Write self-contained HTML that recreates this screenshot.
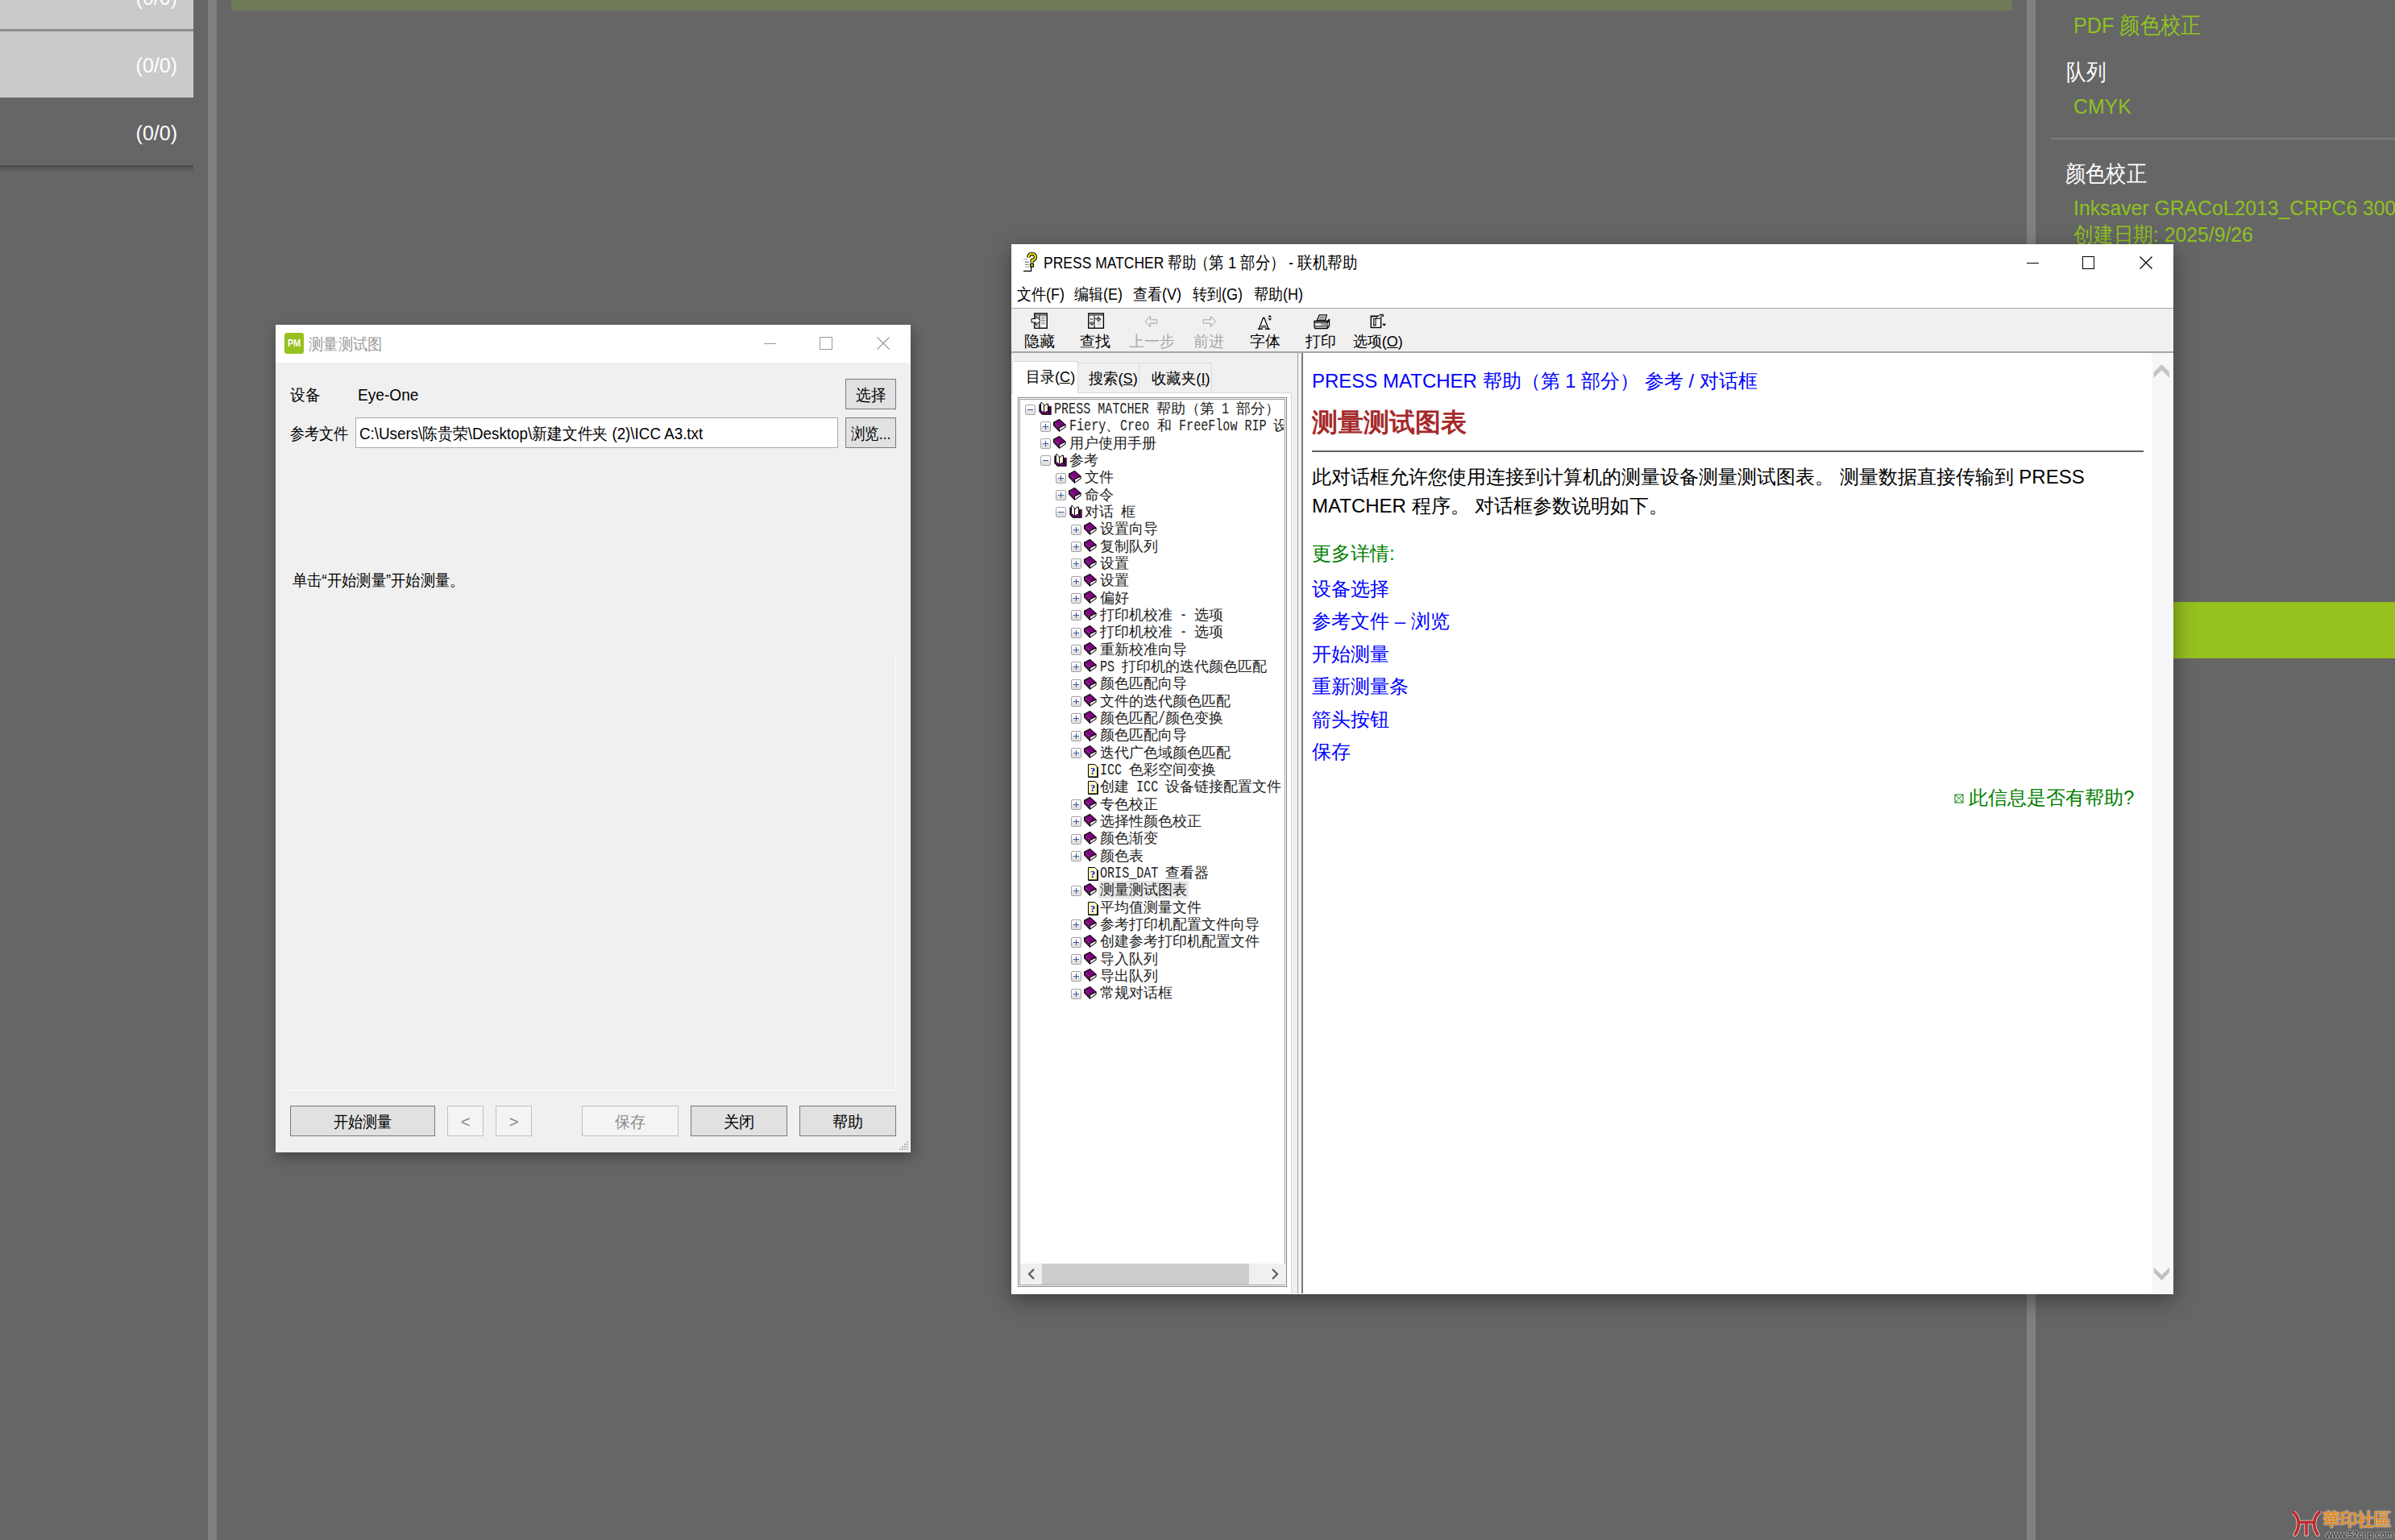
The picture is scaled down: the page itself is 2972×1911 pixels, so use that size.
<!DOCTYPE html>
<html><head><meta charset="utf-8">
<style>
*{margin:0;padding:0;box-sizing:border-box}
html,body{width:2972px;height:1911px;overflow:hidden}
body{background:#666666;position:relative;font-family:"Liberation Sans",sans-serif;color:#000}
.a{position:absolute}
.nw{white-space:nowrap}
.sx{transform-origin:0 50%}
.exp{width:13px;height:13px;border:1px solid #a3a3a3;border-radius:2px;background:linear-gradient(#fff 50%,#e2e2e2 50%)}
.tr{font-size:18px;line-height:22px;color:#222}
.lmo{display:inline-block;overflow:visible;white-space:nowrap}
.lm{display:inline-block;font-family:"Liberation Mono",monospace;font-size:19.5px;transform:scaleX(0.7735);transform-origin:0 0}
.btn{background:#e1e1e1;border:1px solid #7a7a7a;font-size:20px;line-height:35px;text-align:center}
.btnd{background:#f4f4f4;border:1px solid #bcc1c5;font-size:20px;line-height:35px;text-align:center;color:#8a8a8a}
</style></head><body>
<div class="a" style="left:0;top:0;width:240px;height:36px;background:#cacaca"></div>
<div class="a" style="left:0;top:36px;width:240px;height:3px;background:#8e8e8e"></div>
<div class="a" style="left:0;top:39px;width:240px;height:82px;background:#cacaca"></div>
<div class="a" style="left:0;top:205px;width:240px;height:2px;background:#4d4d4d"></div>
<div class="a" style="left:0;top:207px;width:240px;height:7px;background:linear-gradient(#545454,#666)"></div>
<div class="a nw" style="right:2752px;top:-18px;font-size:25px;line-height:30px;color:#fff">(0/0)</div>
<div class="a nw" style="right:2752px;top:66px;font-size:25px;line-height:30px;color:#fff">(0/0)</div>
<div class="a nw" style="right:2752px;top:150px;font-size:25px;line-height:30px;color:#fff">(0/0)</div>
<div class="a" style="left:258px;top:0;width:11px;height:1911px;background:#808080"></div>
<div class="a" style="left:287px;top:0;width:2210px;height:13px;background:#6e7a58"></div>
<div class="a" style="left:2515px;top:0;width:11px;height:1911px;background:#808080"></div>
<div class="a nw" style="left:2573px;top:15px;font-size:28px;line-height:34px;color:#8dc21f;transform:scaleX(0.9);transform-origin:0 50%">PDF 颜色校正</div>
<div class="a nw" style="left:2564px;top:73px;font-size:28px;line-height:34px;color:#fff;transform:scaleX(0.88);transform-origin:0 50%">队列</div>
<div class="a nw" style="left:2573px;top:115px;font-size:26px;line-height:34px;color:#8dc21f;transform:scaleX(0.955);transform-origin:0 50%">CMYK</div>
<div class="a" style="left:2544px;top:171px;width:428px;height:2px;background:#7c7c7c"></div>
<div class="a nw" style="left:2563px;top:199px;font-size:28px;line-height:34px;color:#fff;transform:scaleX(0.9);transform-origin:0 50%">颜色校正</div>
<div class="a nw" style="left:2573px;top:241px;font-size:26px;line-height:34px;color:#8dc21f;transform:scaleX(0.952);transform-origin:0 50%">Inksaver GRACoL2013_CRPC6 300</div>
<div class="a nw" style="left:2573px;top:274px;font-size:26px;line-height:34px;color:#8dc21f;transform:scaleX(0.952);transform-origin:0 50%">创建日期: 2025/9/26</div>
<div class="a" style="left:2697px;top:747px;width:275px;height:70px;background:#96c11f"></div>
<svg class="a" style="left:2844px;top:1875px" width="38" height="34" viewBox="0 0 38 34"><g fill="none" stroke="#d8d8d8" stroke-width="5.2" stroke-linecap="round"><path d="M1.5 1.5C9 7 11 19 4 29"/><path d="M34.5 1.5C27 7 25 19 32 29"/><path d="M9 14H27"/><path d="M18 14V29"/></g><g fill="none" stroke="#bf2a2a" stroke-width="3.6" stroke-linecap="round"><path d="M1.5 1.5C9 7 11 19 4 29"/><path d="M34.5 1.5C27 7 25 19 32 29"/><path d="M9 14H27"/><path d="M18 14V29"/></g></svg>
<div class="a nw" style="left:2883px;top:1872px;font-size:22px;line-height:28px;color:#e08a22;font-weight:bold;letter-spacing:0px;transform:scaleX(0.95);transform-origin:0 50%;text-shadow:0 0 2px #dde3ea,0 0 1px #dde3ea">華印社區</div>
<div class="a nw" style="left:2886px;top:1898px;font-size:11px;line-height:12px;color:#333;font-weight:bold;transform:scaleX(0.98);transform-origin:0 50%;text-shadow:0 0 2px #eee,0 0 1px #eee">www.52cnp.com</div>
<div class="a" style="left:342px;top:403px;width:788px;height:1027px;background:#f0f0f0;box-shadow:2px 6px 16px rgba(0,0,0,0.32)"><div class="a" style="left:0;top:0;width:788px;height:47px;background:#fff"></div><div class="a" style="left:11px;top:10px;width:24px;height:26px;background:#97c020;border-radius:3px;color:#fff;font-weight:bold;font-size:13px;line-height:25px;text-align:center"><div style="transform:scaleX(0.85)">PM</div></div><div class="a nw" style="left:41px;top:11px;font-size:20px;line-height:26px;color:#9a9a9a;transform:scaleX(0.914);transform-origin:0 50%">测量测试图</div><div class="a" style="left:606px;top:23px;width:15px;height:1px;background:#999"></div><div class="a" style="left:675px;top:15px;width:16px;height:16px;border:1px solid #999"></div><svg class="a" style="left:746px;top:15px" width="16" height="16" viewBox="0 0 16 16"><path d="M0.5 0.5L15.5 15.5M15.5 0.5L0.5 15.5" stroke="#999" stroke-width="1.1"/></svg><div class="a nw" style="left:18px;top:74px;font-size:20px;line-height:26px;color:#000;transform:scaleX(0.93);transform-origin:0 50%">设备</div><div class="a nw" style="left:102px;top:74px;font-size:20px;line-height:26px;color:#000;transform:scaleX(0.955);transform-origin:0 50%">Eye-One</div><div class="a btn" style="left:707px;top:67px;width:63px;height:38px"><div style="transform:scaleX(0.93);margin-top:2px">选择</div></div><div class="a nw" style="left:18px;top:122px;font-size:20px;line-height:26px;color:#000;transform:scaleX(0.906);transform-origin:0 50%">参考文件</div><div class="a" style="left:99px;top:115px;width:599px;height:38px;background:#fff;border:1px solid #a9abad"></div><div class="a nw" style="left:104px;top:122px;font-size:20px;line-height:26px;color:#000;transform:scaleX(0.94);transform-origin:0 50%">C:\Users\陈贵荣\Desktop\新建文件夹 (2)\ICC A3.txt</div><div class="a btn" style="left:707px;top:115px;width:63px;height:38px"><div style="transform:scaleX(0.88);margin-top:2px">浏览...</div></div><div class="a nw" style="left:21px;top:304px;font-size:20px;line-height:26px;color:#000;transform:scaleX(0.915);transform-origin:0 50%">单击“开始测量”开始测量。</div><div class="a" style="left:18px;top:949px;width:752px;height:1px;background:#fff"></div><div class="a" style="left:769px;top:405px;width:1px;height:545px;background:#fafafa"></div><div class="a btn" style="left:18px;top:969px;width:180px;height:38px"><div style="transform:scaleX(0.907);margin-top:2px">开始测量</div></div><div class="a btnd" style="left:213px;top:969px;width:45px;height:38px"><div style="transform:scaleX(1);margin-top:2px">&lt;</div></div><div class="a btnd" style="left:273px;top:969px;width:45px;height:38px"><div style="transform:scaleX(1);margin-top:2px">&gt;</div></div><div class="a btnd" style="left:380px;top:969px;width:120px;height:38px"><div style="transform:scaleX(0.95);margin-top:2px">保存</div></div><div class="a btn" style="left:515px;top:969px;width:120px;height:38px"><div style="transform:scaleX(0.97);margin-top:2px">关闭</div></div><div class="a btn" style="left:650px;top:969px;width:120px;height:38px"><div style="transform:scaleX(0.95);margin-top:2px">帮助</div></div><svg class="a" style="left:774px;top:1012px" width="12" height="12" viewBox="0 0 12 12" fill="#b8b8b8"><rect x="9" y="1" width="2" height="2"/><rect x="6" y="4" width="2" height="2"/><rect x="9" y="4" width="2" height="2"/><rect x="3" y="7" width="2" height="2"/><rect x="6" y="7" width="2" height="2"/><rect x="9" y="7" width="2" height="2"/><rect x="0" y="10" width="2" height="2"/><rect x="3" y="10" width="2" height="2"/><rect x="6" y="10" width="2" height="2"/><rect x="9" y="10" width="2" height="2"/></svg></div>
<div class="a" style="left:1255px;top:303px;width:1442px;height:1303px;background:#fff;box-shadow:0 8px 26px rgba(0,0,0,0.4);overflow:hidden"><svg class="a" style="left:14px;top:9px" width="20" height="27" viewBox="0 0 20 27"><path d="M1 9.6h5" stroke="#bbb" stroke-width="1.3"/><path d="M3 13.3h4.8M3 16.4h4.8" stroke="#888" stroke-width="1.4"/><path d="M3 19.2h5.5" stroke="#999" stroke-width="0.9"/><path d="M1 24.4h9.6V19" stroke="#000" stroke-width="1.2" fill="none"/><path d="M7.6 7.6V5.2L9.4 3.3h4.4l1.9 1.9v3.6l-1.9 2h-2.2v2.6" fill="none" stroke="#000" stroke-width="4.2" stroke-linejoin="round"/><path d="M7.6 7.6V5.2L9.4 3.3h4.4l1.9 1.9v3.6l-1.9 2h-2.2v2.6" fill="none" stroke="#ffee00" stroke-width="2"/><rect x="9.8" y="15.2" width="3.6" height="3.8" fill="#ffee00" stroke="#000" stroke-width="1.3"/></svg><div class="a nw" style="left:40.3px;top:10px;font-size:21px;line-height:26px;color:#000;transform:scaleX(0.833);transform-origin:0 50%">PRESS MATCHER 帮助</div><div class="a nw" style="left:227.4px;top:10px;font-size:21px;line-height:26px;color:#000;transform:scaleX(0.877);transform-origin:0 50%">（第 1 部分）</div><div class="a nw" style="left:344.4px;top:10px;font-size:21px;line-height:26px;color:#000;transform:scaleX(0.878);transform-origin:0 50%">- 联机帮助</div><div class="a" style="left:1260px;top:23px;width:15px;height:1.3px;background:#000"></div><div class="a" style="left:1329px;top:15px;width:15px;height:16px;border:1.3px solid #000"></div><svg class="a" style="left:1400px;top:15px" width="16" height="16" viewBox="0 0 16 16"><path d="M0.5 0.5L15.5 15.5M15.5 0.5L0.5 15.5" stroke="#000" stroke-width="1.3"/></svg><div class="a nw" style="left:7px;top:49px;font-size:20px;line-height:26px;color:#000;transform:scaleX(0.9);transform-origin:0 50%">文件(F)</div><div class="a nw" style="left:78px;top:49px;font-size:20px;line-height:26px;color:#000;transform:scaleX(0.9);transform-origin:0 50%">编辑(E)</div><div class="a nw" style="left:151px;top:49px;font-size:20px;line-height:26px;color:#000;transform:scaleX(0.9);transform-origin:0 50%">查看(V)</div><div class="a nw" style="left:225px;top:49px;font-size:20px;line-height:26px;color:#000;transform:scaleX(0.9);transform-origin:0 50%">转到(G)</div><div class="a nw" style="left:301px;top:49px;font-size:20px;line-height:26px;color:#000;transform:scaleX(0.9);transform-origin:0 50%">帮助(H)</div><div class="a" style="left:0;top:79px;width:1442px;height:1px;background:#a8a8a8"></div><div class="a" style="left:0;top:80px;width:1442px;height:54px;background:#f0f0f0"></div><svg class="a" style="left:24px;top:84px" width="22" height="22" viewBox="0 0 22 22"><rect x="4.7" y="2" width="15.5" height="18.2" fill="#fff" stroke="#000" stroke-width="1.4"/><rect x="4.7" y="2" width="15.5" height="2.6" fill="#333"/><path d="M5.5 3.3h14" stroke="#ddd" stroke-width="0.6"/><rect x="5.4" y="4.6" width="5" height="15" fill="#c8c8c8"/><path d="M10.9 4.5v15.5" stroke="#000" stroke-width="1.1"/><path d="M13 6.4h5.5M13 8.5h4.5M13 10.5h5.5M13 12.6h4.5M13 14.8h5.5" stroke="#777" stroke-width="0.9"/><path d="M1 8.6H6.4V5.3L12 10.8L6.4 16.3V13H1Z" fill="#fff" stroke="#000" stroke-width="1" stroke-linejoin="miter"/></svg><div class="a nw" style="left:-25px;top:108px;width:120px;text-align:center;font-size:19px;line-height:26px;color:#000">隐藏</div><svg class="a" style="left:93px;top:84px" width="24" height="22" viewBox="0 0 24 22"><rect x="2.8" y="2" width="18.6" height="18.2" fill="#fff" stroke="#000" stroke-width="1.4"/><rect x="2.8" y="2" width="18.6" height="2.6" fill="#333"/><path d="M3.5 3.3h17" stroke="#ddd" stroke-width="0.6"/><path d="M10 4.5v15.5" stroke="#000" stroke-width="1.1"/><path d="M13 10h6M13 12h6M13 14h6M13 16h6" stroke="#bbb" stroke-width="0.9"/><path d="M10.5 8.3h4V6l3.5 3-3.5 3" fill="#888" stroke="#000" stroke-width="0.8"/><path d="M9.5 13.5l-2.5 3.5 -3-3 2-1.5z" fill="#777" stroke="#333" stroke-width="0.8"/><circle cx="5.6" cy="9" r="0.8" fill="#000"/><circle cx="7.3" cy="9" r="0.8" fill="#000"/></svg><div class="a nw" style="left:44px;top:108px;width:120px;text-align:center;font-size:19px;line-height:26px;color:#000">查找</div><svg class="a" style="left:165px;top:87px" width="18" height="17" viewBox="0 0 18 17"><path d="M1.2 11.4L7.4 4.9V9.3H15.7V13.7H7.4V18.1Z" transform="translate(0,-2.5)" fill="none" stroke="#a3a3a3" stroke-width="1"/></svg><div class="a nw" style="left:114px;top:108px;width:120px;text-align:center;font-size:19px;line-height:26px;color:#a8a8a8">上一步</div><svg class="a" style="left:237px;top:87px" width="18" height="17" viewBox="0 0 18 17"><path d="M16.7 11.4L10.4 4.9V9.3H1.1V13.7H10.4V18.1Z" transform="translate(0,-2.5)" fill="none" stroke="#a3a3a3" stroke-width="1"/></svg><div class="a nw" style="left:185px;top:108px;width:120px;text-align:center;font-size:19px;line-height:26px;color:#a8a8a8">前进</div><svg class="a" style="left:304px;top:86px" width="20" height="21" viewBox="0 0 20 21"><path d="M3.5 18.8L8.3 5.8H10L14.8 18.8" fill="#fff" stroke="#000" stroke-width="1.3"/><path d="M6.3 14.6h5.5l1.1 3.5H5.3z" fill="#777"/><path d="M1.9 19.2h6M10.8 19.2h6" stroke="#000" stroke-width="1.6"/><circle cx="9.1" cy="5.6" r="1" fill="#000"/><path d="M14.4 4.6l2.4-2.6 2.4 2.6zM14.4 6.2l2.4 2.6 2.4-2.6z" fill="#000"/></svg><div class="a nw" style="left:255px;top:108px;width:120px;text-align:center;font-size:19px;line-height:26px;color:#000">字体</div><svg class="a" style="left:374px;top:83px" width="23" height="25" viewBox="0 0 23 25"><path d="M8.2 4.8H17.2L15.3 12H5.2Z" fill="#fff" stroke="#000" stroke-width="1.3"/><path d="M8.5 7.5h6.5M7.6 10h6.8" stroke="#000" stroke-width="0.9"/><path d="M2 12.5H18L20.5 10.5V18.5L18 21.5H2.8L2 19Z" fill="#fff" stroke="#000" stroke-width="1.3"/><path d="M2 14.3H18M2.5 19H18M18 12.5V21.5M18 14.3L20.5 12.3" stroke="#000" stroke-width="1.1"/><rect x="3" y="15.2" width="14.5" height="2.6" fill="#999"/><rect x="3.2" y="15.5" width="7" height="2" fill="#fff"/></svg><div class="a nw" style="left:324px;top:108px;width:120px;text-align:center;font-size:19px;line-height:26px;color:#000">打印</div><svg class="a" style="left:444px;top:84px" width="24" height="24" viewBox="0 0 24 24"><rect x="2.3" y="5.2" width="12.3" height="14.3" fill="#fff" stroke="#000" stroke-width="1.4"/><path d="M3 6.5h11" stroke="#888" stroke-width="1"/><rect x="5.5" y="8.5" width="2.7" height="8.5" fill="#999" stroke="#000" stroke-width="0.9"/><path d="M5.5 10h2.7M5.5 12h2.7M5.5 14h2.7" stroke="#fff" stroke-width="0.5"/><path d="M8 8.5L12.8 3.8H17.5L13 8.5z" fill="#ddd" stroke="#000" stroke-width="0.9"/><path d="M13 3.5h4.3v2.5" fill="none" stroke="#333" stroke-width="1.5"/><path d="M16.2 14.7h5l-2.5 3z" fill="#000"/></svg><div class="a nw" style="left:394.5px;top:108px;width:120px;text-align:center;font-size:19px;line-height:26px;color:#000"><span style="display:inline-block;transform:scaleX(0.95)">选项(<u>O</u>)</span></div><div class="a" style="left:0;top:133px;width:1442px;height:2px;background:#a6a6a6"></div><div class="a" style="left:0;top:135px;width:361px;height:1167px;background:#f0f0f0"></div><div class="a" style="left:0;top:184px;width:348px;height:1118px;border-top:1px solid #d9d9d9;border-right:1px solid #d9d9d9;background:#fff"></div><div class="a" style="left:1px;top:145px;width:82px;height:40px;background:#fff;border:1px solid #d9d9d9;border-bottom:none"></div><div class="a" style="left:83px;top:147px;width:76px;height:37px;background:#f0f0f0;border:1px solid #d9d9d9;border-bottom:none;border-left:none"></div><div class="a" style="left:159px;top:147px;width:90px;height:37px;background:#f0f0f0;border:1px solid #d9d9d9;border-bottom:none;border-left:none"></div><div class="a nw" style="left:18px;top:152px;font-size:19px;line-height:26px;color:#000;transform:scaleX(0.95);transform-origin:0 50%">目录(<u>C</u>)</div><div class="a nw" style="left:96px;top:154px;font-size:19px;line-height:26px;color:#000;transform:scaleX(0.96);transform-origin:0 50%">搜索(<u>S</u>)</div><div class="a nw" style="left:174px;top:154px;font-size:19px;line-height:26px;color:#000;transform:scaleX(0.97);transform-origin:0 50%">收藏夹(<u>I</u>)</div><div class="a" style="left:8px;top:190px;width:334px;height:1104px;background:#fff;border:1px solid #828790;box-shadow:inset 0 0 0 1px #fff, inset 0 0 0 2px #a0a0a0;overflow:hidden"><div class="a" style="left:0;top:0;width:329px;height:1100px;overflow:hidden"><div class="a exp" style="left:8px;top:8px"><div class="a" style="left:2px;top:5px;width:7px;height:1px;background:#3d55a0"></div></div><svg class="a" style="left:25px;top:4px" width="16" height="17" viewBox="0 0 16 17"><path d="M1 3.5V12.5L4.5 16.2H15V6" fill="#800080" stroke="#000" stroke-width="1.3" stroke-linejoin="round"/><path d="M2.5 3L3 1L6.5 5V14.5L2.5 11Z" fill="#fff" stroke="#000" stroke-width="0.9"/><path d="M6.5 6Q9 3 11.5 3V12Q9 12.5 6.5 14.5Z" fill="#fff" stroke="#000" stroke-width="1"/><path d="M9 6v0.5M10.5 5.5v0.5M9 8v0.5M10.5 7.5v0.5M9 10v0.5M10.5 9.5v0.5" stroke="#ffe000" stroke-width="1.3"/><path d="M12.5 7V14.5" stroke="#000" stroke-width="1.2"/></svg><div class="a nw tr" style="left:44px;top:2px"><span class="lmo" style="width:126.70px"><span class="lm">PRESS&nbsp;MATCHER&nbsp;</span></span>帮助（第<span class="lmo" style="width:27.15px"><span class="lm">&nbsp;1&nbsp;</span></span>部分）</div><div class="a exp" style="left:27px;top:29px"><div class="a" style="left:2px;top:5px;width:7px;height:1px;background:#3d55a0"></div><div class="a" style="left:5px;top:2px;width:1px;height:7px;background:#3d55a0"></div></div><svg class="a" style="left:43px;top:26px" width="16" height="16" viewBox="0 0 17 17"><path d="M0.5 4.5L8 0.5L16 7.5L8 11.5Z" fill="#800080" stroke="#000" stroke-width="1.1" stroke-linejoin="round"/><path d="M0.5 4.5L8 11.5V16L0.5 8.5Z" fill="#800080" stroke="#000" stroke-width="1.1" stroke-linejoin="round"/><path d="M8 11.5L16 7.5V10.5L8 16Z" fill="#fff" stroke="#000" stroke-width="1.1" stroke-linejoin="round"/><path d="M1.5 5.2L8 11" stroke="#d8b0d8" stroke-width="0.7"/></svg><div class="a nw tr" style="left:63px;top:23px"><span class="lmo" style="width:45.25px"><span class="lm">Fiery</span></span>、<span class="lmo" style="width:45.25px"><span class="lm">Creo&nbsp;</span></span>和<span class="lmo" style="width:126.70px"><span class="lm">&nbsp;FreeFlow&nbsp;RIP&nbsp;</span></span>设置</div><div class="a exp" style="left:27px;top:50px"><div class="a" style="left:2px;top:5px;width:7px;height:1px;background:#3d55a0"></div><div class="a" style="left:5px;top:2px;width:1px;height:7px;background:#3d55a0"></div></div><svg class="a" style="left:43px;top:47px" width="16" height="16" viewBox="0 0 17 17"><path d="M0.5 4.5L8 0.5L16 7.5L8 11.5Z" fill="#800080" stroke="#000" stroke-width="1.1" stroke-linejoin="round"/><path d="M0.5 4.5L8 11.5V16L0.5 8.5Z" fill="#800080" stroke="#000" stroke-width="1.1" stroke-linejoin="round"/><path d="M8 11.5L16 7.5V10.5L8 16Z" fill="#fff" stroke="#000" stroke-width="1.1" stroke-linejoin="round"/><path d="M1.5 5.2L8 11" stroke="#d8b0d8" stroke-width="0.7"/></svg><div class="a nw tr" style="left:63px;top:45px">用户使用手册</div><div class="a exp" style="left:27px;top:71px"><div class="a" style="left:2px;top:5px;width:7px;height:1px;background:#3d55a0"></div></div><svg class="a" style="left:44px;top:68px" width="16" height="17" viewBox="0 0 16 17"><path d="M1 3.5V12.5L4.5 16.2H15V6" fill="#800080" stroke="#000" stroke-width="1.3" stroke-linejoin="round"/><path d="M2.5 3L3 1L6.5 5V14.5L2.5 11Z" fill="#fff" stroke="#000" stroke-width="0.9"/><path d="M6.5 6Q9 3 11.5 3V12Q9 12.5 6.5 14.5Z" fill="#fff" stroke="#000" stroke-width="1"/><path d="M9 6v0.5M10.5 5.5v0.5M9 8v0.5M10.5 7.5v0.5M9 10v0.5M10.5 9.5v0.5" stroke="#ffe000" stroke-width="1.3"/><path d="M12.5 7V14.5" stroke="#000" stroke-width="1.2"/></svg><div class="a nw tr" style="left:63px;top:66px">参考</div><div class="a exp" style="left:46px;top:93px"><div class="a" style="left:2px;top:5px;width:7px;height:1px;background:#3d55a0"></div><div class="a" style="left:5px;top:2px;width:1px;height:7px;background:#3d55a0"></div></div><svg class="a" style="left:62px;top:90px" width="16" height="16" viewBox="0 0 17 17"><path d="M0.5 4.5L8 0.5L16 7.5L8 11.5Z" fill="#800080" stroke="#000" stroke-width="1.1" stroke-linejoin="round"/><path d="M0.5 4.5L8 11.5V16L0.5 8.5Z" fill="#800080" stroke="#000" stroke-width="1.1" stroke-linejoin="round"/><path d="M8 11.5L16 7.5V10.5L8 16Z" fill="#fff" stroke="#000" stroke-width="1.1" stroke-linejoin="round"/><path d="M1.5 5.2L8 11" stroke="#d8b0d8" stroke-width="0.7"/></svg><div class="a nw tr" style="left:82px;top:87px">文件</div><div class="a exp" style="left:46px;top:114px"><div class="a" style="left:2px;top:5px;width:7px;height:1px;background:#3d55a0"></div><div class="a" style="left:5px;top:2px;width:1px;height:7px;background:#3d55a0"></div></div><svg class="a" style="left:62px;top:111px" width="16" height="16" viewBox="0 0 17 17"><path d="M0.5 4.5L8 0.5L16 7.5L8 11.5Z" fill="#800080" stroke="#000" stroke-width="1.1" stroke-linejoin="round"/><path d="M0.5 4.5L8 11.5V16L0.5 8.5Z" fill="#800080" stroke="#000" stroke-width="1.1" stroke-linejoin="round"/><path d="M8 11.5L16 7.5V10.5L8 16Z" fill="#fff" stroke="#000" stroke-width="1.1" stroke-linejoin="round"/><path d="M1.5 5.2L8 11" stroke="#d8b0d8" stroke-width="0.7"/></svg><div class="a nw tr" style="left:82px;top:109px">命令</div><div class="a exp" style="left:46px;top:135px"><div class="a" style="left:2px;top:5px;width:7px;height:1px;background:#3d55a0"></div></div><svg class="a" style="left:63px;top:132px" width="16" height="17" viewBox="0 0 16 17"><path d="M1 3.5V12.5L4.5 16.2H15V6" fill="#800080" stroke="#000" stroke-width="1.3" stroke-linejoin="round"/><path d="M2.5 3L3 1L6.5 5V14.5L2.5 11Z" fill="#fff" stroke="#000" stroke-width="0.9"/><path d="M6.5 6Q9 3 11.5 3V12Q9 12.5 6.5 14.5Z" fill="#fff" stroke="#000" stroke-width="1"/><path d="M9 6v0.5M10.5 5.5v0.5M9 8v0.5M10.5 7.5v0.5M9 10v0.5M10.5 9.5v0.5" stroke="#ffe000" stroke-width="1.3"/><path d="M12.5 7V14.5" stroke="#000" stroke-width="1.2"/></svg><div class="a nw tr" style="left:82px;top:130px">对话<span class="lmo" style="width:9.05px"><span class="lm">&nbsp;</span></span>框</div><div class="a exp" style="left:65px;top:157px"><div class="a" style="left:2px;top:5px;width:7px;height:1px;background:#3d55a0"></div><div class="a" style="left:5px;top:2px;width:1px;height:7px;background:#3d55a0"></div></div><svg class="a" style="left:81px;top:154px" width="16" height="16" viewBox="0 0 17 17"><path d="M0.5 4.5L8 0.5L16 7.5L8 11.5Z" fill="#800080" stroke="#000" stroke-width="1.1" stroke-linejoin="round"/><path d="M0.5 4.5L8 11.5V16L0.5 8.5Z" fill="#800080" stroke="#000" stroke-width="1.1" stroke-linejoin="round"/><path d="M8 11.5L16 7.5V10.5L8 16Z" fill="#fff" stroke="#000" stroke-width="1.1" stroke-linejoin="round"/><path d="M1.5 5.2L8 11" stroke="#d8b0d8" stroke-width="0.7"/></svg><div class="a nw tr" style="left:101px;top:151px">设置向导</div><div class="a exp" style="left:65px;top:178px"><div class="a" style="left:2px;top:5px;width:7px;height:1px;background:#3d55a0"></div><div class="a" style="left:5px;top:2px;width:1px;height:7px;background:#3d55a0"></div></div><svg class="a" style="left:81px;top:175px" width="16" height="16" viewBox="0 0 17 17"><path d="M0.5 4.5L8 0.5L16 7.5L8 11.5Z" fill="#800080" stroke="#000" stroke-width="1.1" stroke-linejoin="round"/><path d="M0.5 4.5L8 11.5V16L0.5 8.5Z" fill="#800080" stroke="#000" stroke-width="1.1" stroke-linejoin="round"/><path d="M8 11.5L16 7.5V10.5L8 16Z" fill="#fff" stroke="#000" stroke-width="1.1" stroke-linejoin="round"/><path d="M1.5 5.2L8 11" stroke="#d8b0d8" stroke-width="0.7"/></svg><div class="a nw tr" style="left:101px;top:173px">复制队列</div><div class="a exp" style="left:65px;top:199px"><div class="a" style="left:2px;top:5px;width:7px;height:1px;background:#3d55a0"></div><div class="a" style="left:5px;top:2px;width:1px;height:7px;background:#3d55a0"></div></div><svg class="a" style="left:81px;top:196px" width="16" height="16" viewBox="0 0 17 17"><path d="M0.5 4.5L8 0.5L16 7.5L8 11.5Z" fill="#800080" stroke="#000" stroke-width="1.1" stroke-linejoin="round"/><path d="M0.5 4.5L8 11.5V16L0.5 8.5Z" fill="#800080" stroke="#000" stroke-width="1.1" stroke-linejoin="round"/><path d="M8 11.5L16 7.5V10.5L8 16Z" fill="#fff" stroke="#000" stroke-width="1.1" stroke-linejoin="round"/><path d="M1.5 5.2L8 11" stroke="#d8b0d8" stroke-width="0.7"/></svg><div class="a nw tr" style="left:101px;top:194px">设置</div><div class="a exp" style="left:65px;top:221px"><div class="a" style="left:2px;top:5px;width:7px;height:1px;background:#3d55a0"></div><div class="a" style="left:5px;top:2px;width:1px;height:7px;background:#3d55a0"></div></div><svg class="a" style="left:81px;top:218px" width="16" height="16" viewBox="0 0 17 17"><path d="M0.5 4.5L8 0.5L16 7.5L8 11.5Z" fill="#800080" stroke="#000" stroke-width="1.1" stroke-linejoin="round"/><path d="M0.5 4.5L8 11.5V16L0.5 8.5Z" fill="#800080" stroke="#000" stroke-width="1.1" stroke-linejoin="round"/><path d="M8 11.5L16 7.5V10.5L8 16Z" fill="#fff" stroke="#000" stroke-width="1.1" stroke-linejoin="round"/><path d="M1.5 5.2L8 11" stroke="#d8b0d8" stroke-width="0.7"/></svg><div class="a nw tr" style="left:101px;top:215px">设置</div><div class="a exp" style="left:65px;top:242px"><div class="a" style="left:2px;top:5px;width:7px;height:1px;background:#3d55a0"></div><div class="a" style="left:5px;top:2px;width:1px;height:7px;background:#3d55a0"></div></div><svg class="a" style="left:81px;top:239px" width="16" height="16" viewBox="0 0 17 17"><path d="M0.5 4.5L8 0.5L16 7.5L8 11.5Z" fill="#800080" stroke="#000" stroke-width="1.1" stroke-linejoin="round"/><path d="M0.5 4.5L8 11.5V16L0.5 8.5Z" fill="#800080" stroke="#000" stroke-width="1.1" stroke-linejoin="round"/><path d="M8 11.5L16 7.5V10.5L8 16Z" fill="#fff" stroke="#000" stroke-width="1.1" stroke-linejoin="round"/><path d="M1.5 5.2L8 11" stroke="#d8b0d8" stroke-width="0.7"/></svg><div class="a nw tr" style="left:101px;top:237px">偏好</div><div class="a exp" style="left:65px;top:263px"><div class="a" style="left:2px;top:5px;width:7px;height:1px;background:#3d55a0"></div><div class="a" style="left:5px;top:2px;width:1px;height:7px;background:#3d55a0"></div></div><svg class="a" style="left:81px;top:260px" width="16" height="16" viewBox="0 0 17 17"><path d="M0.5 4.5L8 0.5L16 7.5L8 11.5Z" fill="#800080" stroke="#000" stroke-width="1.1" stroke-linejoin="round"/><path d="M0.5 4.5L8 11.5V16L0.5 8.5Z" fill="#800080" stroke="#000" stroke-width="1.1" stroke-linejoin="round"/><path d="M8 11.5L16 7.5V10.5L8 16Z" fill="#fff" stroke="#000" stroke-width="1.1" stroke-linejoin="round"/><path d="M1.5 5.2L8 11" stroke="#d8b0d8" stroke-width="0.7"/></svg><div class="a nw tr" style="left:101px;top:258px">打印机校准<span class="lmo" style="width:27.15px"><span class="lm">&nbsp;-&nbsp;</span></span>选项</div><div class="a exp" style="left:65px;top:285px"><div class="a" style="left:2px;top:5px;width:7px;height:1px;background:#3d55a0"></div><div class="a" style="left:5px;top:2px;width:1px;height:7px;background:#3d55a0"></div></div><svg class="a" style="left:81px;top:282px" width="16" height="16" viewBox="0 0 17 17"><path d="M0.5 4.5L8 0.5L16 7.5L8 11.5Z" fill="#800080" stroke="#000" stroke-width="1.1" stroke-linejoin="round"/><path d="M0.5 4.5L8 11.5V16L0.5 8.5Z" fill="#800080" stroke="#000" stroke-width="1.1" stroke-linejoin="round"/><path d="M8 11.5L16 7.5V10.5L8 16Z" fill="#fff" stroke="#000" stroke-width="1.1" stroke-linejoin="round"/><path d="M1.5 5.2L8 11" stroke="#d8b0d8" stroke-width="0.7"/></svg><div class="a nw tr" style="left:101px;top:279px">打印机校准<span class="lmo" style="width:27.15px"><span class="lm">&nbsp;-&nbsp;</span></span>选项</div><div class="a exp" style="left:65px;top:306px"><div class="a" style="left:2px;top:5px;width:7px;height:1px;background:#3d55a0"></div><div class="a" style="left:5px;top:2px;width:1px;height:7px;background:#3d55a0"></div></div><svg class="a" style="left:81px;top:303px" width="16" height="16" viewBox="0 0 17 17"><path d="M0.5 4.5L8 0.5L16 7.5L8 11.5Z" fill="#800080" stroke="#000" stroke-width="1.1" stroke-linejoin="round"/><path d="M0.5 4.5L8 11.5V16L0.5 8.5Z" fill="#800080" stroke="#000" stroke-width="1.1" stroke-linejoin="round"/><path d="M8 11.5L16 7.5V10.5L8 16Z" fill="#fff" stroke="#000" stroke-width="1.1" stroke-linejoin="round"/><path d="M1.5 5.2L8 11" stroke="#d8b0d8" stroke-width="0.7"/></svg><div class="a nw tr" style="left:101px;top:301px">重新校准向导</div><div class="a exp" style="left:65px;top:327px"><div class="a" style="left:2px;top:5px;width:7px;height:1px;background:#3d55a0"></div><div class="a" style="left:5px;top:2px;width:1px;height:7px;background:#3d55a0"></div></div><svg class="a" style="left:81px;top:324px" width="16" height="16" viewBox="0 0 17 17"><path d="M0.5 4.5L8 0.5L16 7.5L8 11.5Z" fill="#800080" stroke="#000" stroke-width="1.1" stroke-linejoin="round"/><path d="M0.5 4.5L8 11.5V16L0.5 8.5Z" fill="#800080" stroke="#000" stroke-width="1.1" stroke-linejoin="round"/><path d="M8 11.5L16 7.5V10.5L8 16Z" fill="#fff" stroke="#000" stroke-width="1.1" stroke-linejoin="round"/><path d="M1.5 5.2L8 11" stroke="#d8b0d8" stroke-width="0.7"/></svg><div class="a nw tr" style="left:101px;top:322px"><span class="lmo" style="width:27.15px"><span class="lm">PS&nbsp;</span></span>打印机的迭代颜色匹配</div><div class="a exp" style="left:65px;top:349px"><div class="a" style="left:2px;top:5px;width:7px;height:1px;background:#3d55a0"></div><div class="a" style="left:5px;top:2px;width:1px;height:7px;background:#3d55a0"></div></div><svg class="a" style="left:81px;top:346px" width="16" height="16" viewBox="0 0 17 17"><path d="M0.5 4.5L8 0.5L16 7.5L8 11.5Z" fill="#800080" stroke="#000" stroke-width="1.1" stroke-linejoin="round"/><path d="M0.5 4.5L8 11.5V16L0.5 8.5Z" fill="#800080" stroke="#000" stroke-width="1.1" stroke-linejoin="round"/><path d="M8 11.5L16 7.5V10.5L8 16Z" fill="#fff" stroke="#000" stroke-width="1.1" stroke-linejoin="round"/><path d="M1.5 5.2L8 11" stroke="#d8b0d8" stroke-width="0.7"/></svg><div class="a nw tr" style="left:101px;top:343px">颜色匹配向导</div><div class="a exp" style="left:65px;top:370px"><div class="a" style="left:2px;top:5px;width:7px;height:1px;background:#3d55a0"></div><div class="a" style="left:5px;top:2px;width:1px;height:7px;background:#3d55a0"></div></div><svg class="a" style="left:81px;top:367px" width="16" height="16" viewBox="0 0 17 17"><path d="M0.5 4.5L8 0.5L16 7.5L8 11.5Z" fill="#800080" stroke="#000" stroke-width="1.1" stroke-linejoin="round"/><path d="M0.5 4.5L8 11.5V16L0.5 8.5Z" fill="#800080" stroke="#000" stroke-width="1.1" stroke-linejoin="round"/><path d="M8 11.5L16 7.5V10.5L8 16Z" fill="#fff" stroke="#000" stroke-width="1.1" stroke-linejoin="round"/><path d="M1.5 5.2L8 11" stroke="#d8b0d8" stroke-width="0.7"/></svg><div class="a nw tr" style="left:101px;top:365px">文件的迭代颜色匹配</div><div class="a exp" style="left:65px;top:391px"><div class="a" style="left:2px;top:5px;width:7px;height:1px;background:#3d55a0"></div><div class="a" style="left:5px;top:2px;width:1px;height:7px;background:#3d55a0"></div></div><svg class="a" style="left:81px;top:388px" width="16" height="16" viewBox="0 0 17 17"><path d="M0.5 4.5L8 0.5L16 7.5L8 11.5Z" fill="#800080" stroke="#000" stroke-width="1.1" stroke-linejoin="round"/><path d="M0.5 4.5L8 11.5V16L0.5 8.5Z" fill="#800080" stroke="#000" stroke-width="1.1" stroke-linejoin="round"/><path d="M8 11.5L16 7.5V10.5L8 16Z" fill="#fff" stroke="#000" stroke-width="1.1" stroke-linejoin="round"/><path d="M1.5 5.2L8 11" stroke="#d8b0d8" stroke-width="0.7"/></svg><div class="a nw tr" style="left:101px;top:386px">颜色匹配<span class="lmo" style="width:9.05px"><span class="lm">/</span></span>颜色变换</div><div class="a exp" style="left:65px;top:413px"><div class="a" style="left:2px;top:5px;width:7px;height:1px;background:#3d55a0"></div><div class="a" style="left:5px;top:2px;width:1px;height:7px;background:#3d55a0"></div></div><svg class="a" style="left:81px;top:410px" width="16" height="16" viewBox="0 0 17 17"><path d="M0.5 4.5L8 0.5L16 7.5L8 11.5Z" fill="#800080" stroke="#000" stroke-width="1.1" stroke-linejoin="round"/><path d="M0.5 4.5L8 11.5V16L0.5 8.5Z" fill="#800080" stroke="#000" stroke-width="1.1" stroke-linejoin="round"/><path d="M8 11.5L16 7.5V10.5L8 16Z" fill="#fff" stroke="#000" stroke-width="1.1" stroke-linejoin="round"/><path d="M1.5 5.2L8 11" stroke="#d8b0d8" stroke-width="0.7"/></svg><div class="a nw tr" style="left:101px;top:407px">颜色匹配向导</div><div class="a exp" style="left:65px;top:434px"><div class="a" style="left:2px;top:5px;width:7px;height:1px;background:#3d55a0"></div><div class="a" style="left:5px;top:2px;width:1px;height:7px;background:#3d55a0"></div></div><svg class="a" style="left:81px;top:431px" width="16" height="16" viewBox="0 0 17 17"><path d="M0.5 4.5L8 0.5L16 7.5L8 11.5Z" fill="#800080" stroke="#000" stroke-width="1.1" stroke-linejoin="round"/><path d="M0.5 4.5L8 11.5V16L0.5 8.5Z" fill="#800080" stroke="#000" stroke-width="1.1" stroke-linejoin="round"/><path d="M8 11.5L16 7.5V10.5L8 16Z" fill="#fff" stroke="#000" stroke-width="1.1" stroke-linejoin="round"/><path d="M1.5 5.2L8 11" stroke="#d8b0d8" stroke-width="0.7"/></svg><div class="a nw tr" style="left:101px;top:429px">迭代广色域颜色匹配</div><svg class="a" style="left:86px;top:454px" width="13" height="17" viewBox="0 0 13 17"><path d="M0.5 0.5h8l3.5 3.5v12h-11.5z" fill="#ffffc0" stroke="#000" stroke-width="1"/><path d="M12 4v12.5h-11.5" stroke="#000" stroke-width="1.6" fill="none"/><text x="6" y="13" font-size="12" font-weight="bold" text-anchor="middle" fill="#0000e0" font-family="Liberation Serif">?</text></svg><div class="a nw tr" style="left:101px;top:450px"><span class="lmo" style="width:36.20px"><span class="lm">ICC&nbsp;</span></span>色彩空间变换</div><svg class="a" style="left:86px;top:475px" width="13" height="17" viewBox="0 0 13 17"><path d="M0.5 0.5h8l3.5 3.5v12h-11.5z" fill="#ffffc0" stroke="#000" stroke-width="1"/><path d="M12 4v12.5h-11.5" stroke="#000" stroke-width="1.6" fill="none"/><text x="6" y="13" font-size="12" font-weight="bold" text-anchor="middle" fill="#0000e0" font-family="Liberation Serif">?</text></svg><div class="a nw tr" style="left:101px;top:471px">创建<span class="lmo" style="width:45.25px"><span class="lm">&nbsp;ICC&nbsp;</span></span>设备链接配置文件</div><div class="a exp" style="left:65px;top:498px"><div class="a" style="left:2px;top:5px;width:7px;height:1px;background:#3d55a0"></div><div class="a" style="left:5px;top:2px;width:1px;height:7px;background:#3d55a0"></div></div><svg class="a" style="left:81px;top:495px" width="16" height="16" viewBox="0 0 17 17"><path d="M0.5 4.5L8 0.5L16 7.5L8 11.5Z" fill="#800080" stroke="#000" stroke-width="1.1" stroke-linejoin="round"/><path d="M0.5 4.5L8 11.5V16L0.5 8.5Z" fill="#800080" stroke="#000" stroke-width="1.1" stroke-linejoin="round"/><path d="M8 11.5L16 7.5V10.5L8 16Z" fill="#fff" stroke="#000" stroke-width="1.1" stroke-linejoin="round"/><path d="M1.5 5.2L8 11" stroke="#d8b0d8" stroke-width="0.7"/></svg><div class="a nw tr" style="left:101px;top:493px">专色校正</div><div class="a exp" style="left:65px;top:519px"><div class="a" style="left:2px;top:5px;width:7px;height:1px;background:#3d55a0"></div><div class="a" style="left:5px;top:2px;width:1px;height:7px;background:#3d55a0"></div></div><svg class="a" style="left:81px;top:516px" width="16" height="16" viewBox="0 0 17 17"><path d="M0.5 4.5L8 0.5L16 7.5L8 11.5Z" fill="#800080" stroke="#000" stroke-width="1.1" stroke-linejoin="round"/><path d="M0.5 4.5L8 11.5V16L0.5 8.5Z" fill="#800080" stroke="#000" stroke-width="1.1" stroke-linejoin="round"/><path d="M8 11.5L16 7.5V10.5L8 16Z" fill="#fff" stroke="#000" stroke-width="1.1" stroke-linejoin="round"/><path d="M1.5 5.2L8 11" stroke="#d8b0d8" stroke-width="0.7"/></svg><div class="a nw tr" style="left:101px;top:514px">选择性颜色校正</div><div class="a exp" style="left:65px;top:541px"><div class="a" style="left:2px;top:5px;width:7px;height:1px;background:#3d55a0"></div><div class="a" style="left:5px;top:2px;width:1px;height:7px;background:#3d55a0"></div></div><svg class="a" style="left:81px;top:538px" width="16" height="16" viewBox="0 0 17 17"><path d="M0.5 4.5L8 0.5L16 7.5L8 11.5Z" fill="#800080" stroke="#000" stroke-width="1.1" stroke-linejoin="round"/><path d="M0.5 4.5L8 11.5V16L0.5 8.5Z" fill="#800080" stroke="#000" stroke-width="1.1" stroke-linejoin="round"/><path d="M8 11.5L16 7.5V10.5L8 16Z" fill="#fff" stroke="#000" stroke-width="1.1" stroke-linejoin="round"/><path d="M1.5 5.2L8 11" stroke="#d8b0d8" stroke-width="0.7"/></svg><div class="a nw tr" style="left:101px;top:535px">颜色渐变</div><div class="a exp" style="left:65px;top:562px"><div class="a" style="left:2px;top:5px;width:7px;height:1px;background:#3d55a0"></div><div class="a" style="left:5px;top:2px;width:1px;height:7px;background:#3d55a0"></div></div><svg class="a" style="left:81px;top:559px" width="16" height="16" viewBox="0 0 17 17"><path d="M0.5 4.5L8 0.5L16 7.5L8 11.5Z" fill="#800080" stroke="#000" stroke-width="1.1" stroke-linejoin="round"/><path d="M0.5 4.5L8 11.5V16L0.5 8.5Z" fill="#800080" stroke="#000" stroke-width="1.1" stroke-linejoin="round"/><path d="M8 11.5L16 7.5V10.5L8 16Z" fill="#fff" stroke="#000" stroke-width="1.1" stroke-linejoin="round"/><path d="M1.5 5.2L8 11" stroke="#d8b0d8" stroke-width="0.7"/></svg><div class="a nw tr" style="left:101px;top:557px">颜色表</div><svg class="a" style="left:86px;top:582px" width="13" height="17" viewBox="0 0 13 17"><path d="M0.5 0.5h8l3.5 3.5v12h-11.5z" fill="#ffffc0" stroke="#000" stroke-width="1"/><path d="M12 4v12.5h-11.5" stroke="#000" stroke-width="1.6" fill="none"/><text x="6" y="13" font-size="12" font-weight="bold" text-anchor="middle" fill="#0000e0" font-family="Liberation Serif">?</text></svg><div class="a nw tr" style="left:101px;top:578px"><span class="lmo" style="width:81.45px"><span class="lm">ORIS_DAT&nbsp;</span></span>查看器</div><div class="a exp" style="left:65px;top:605px"><div class="a" style="left:2px;top:5px;width:7px;height:1px;background:#3d55a0"></div><div class="a" style="left:5px;top:2px;width:1px;height:7px;background:#3d55a0"></div></div><svg class="a" style="left:81px;top:602px" width="16" height="16" viewBox="0 0 17 17"><path d="M0.5 4.5L8 0.5L16 7.5L8 11.5Z" fill="#800080" stroke="#000" stroke-width="1.1" stroke-linejoin="round"/><path d="M0.5 4.5L8 11.5V16L0.5 8.5Z" fill="#800080" stroke="#000" stroke-width="1.1" stroke-linejoin="round"/><path d="M8 11.5L16 7.5V10.5L8 16Z" fill="#fff" stroke="#000" stroke-width="1.1" stroke-linejoin="round"/><path d="M1.5 5.2L8 11" stroke="#d8b0d8" stroke-width="0.7"/></svg><div class="a nw tr" style="left:101px;top:599px;background:#e8e8e8;padding:0 2px;margin-left:-2px">测量测试图表</div><svg class="a" style="left:86px;top:625px" width="13" height="17" viewBox="0 0 13 17"><path d="M0.5 0.5h8l3.5 3.5v12h-11.5z" fill="#ffffc0" stroke="#000" stroke-width="1"/><path d="M12 4v12.5h-11.5" stroke="#000" stroke-width="1.6" fill="none"/><text x="6" y="13" font-size="12" font-weight="bold" text-anchor="middle" fill="#0000e0" font-family="Liberation Serif">?</text></svg><div class="a nw tr" style="left:101px;top:621px">平均值测量文件</div><div class="a exp" style="left:65px;top:647px"><div class="a" style="left:2px;top:5px;width:7px;height:1px;background:#3d55a0"></div><div class="a" style="left:5px;top:2px;width:1px;height:7px;background:#3d55a0"></div></div><svg class="a" style="left:81px;top:644px" width="16" height="16" viewBox="0 0 17 17"><path d="M0.5 4.5L8 0.5L16 7.5L8 11.5Z" fill="#800080" stroke="#000" stroke-width="1.1" stroke-linejoin="round"/><path d="M0.5 4.5L8 11.5V16L0.5 8.5Z" fill="#800080" stroke="#000" stroke-width="1.1" stroke-linejoin="round"/><path d="M8 11.5L16 7.5V10.5L8 16Z" fill="#fff" stroke="#000" stroke-width="1.1" stroke-linejoin="round"/><path d="M1.5 5.2L8 11" stroke="#d8b0d8" stroke-width="0.7"/></svg><div class="a nw tr" style="left:101px;top:642px">参考打印机配置文件向导</div><div class="a exp" style="left:65px;top:669px"><div class="a" style="left:2px;top:5px;width:7px;height:1px;background:#3d55a0"></div><div class="a" style="left:5px;top:2px;width:1px;height:7px;background:#3d55a0"></div></div><svg class="a" style="left:81px;top:666px" width="16" height="16" viewBox="0 0 17 17"><path d="M0.5 4.5L8 0.5L16 7.5L8 11.5Z" fill="#800080" stroke="#000" stroke-width="1.1" stroke-linejoin="round"/><path d="M0.5 4.5L8 11.5V16L0.5 8.5Z" fill="#800080" stroke="#000" stroke-width="1.1" stroke-linejoin="round"/><path d="M8 11.5L16 7.5V10.5L8 16Z" fill="#fff" stroke="#000" stroke-width="1.1" stroke-linejoin="round"/><path d="M1.5 5.2L8 11" stroke="#d8b0d8" stroke-width="0.7"/></svg><div class="a nw tr" style="left:101px;top:663px">创建参考打印机配置文件</div><div class="a exp" style="left:65px;top:690px"><div class="a" style="left:2px;top:5px;width:7px;height:1px;background:#3d55a0"></div><div class="a" style="left:5px;top:2px;width:1px;height:7px;background:#3d55a0"></div></div><svg class="a" style="left:81px;top:687px" width="16" height="16" viewBox="0 0 17 17"><path d="M0.5 4.5L8 0.5L16 7.5L8 11.5Z" fill="#800080" stroke="#000" stroke-width="1.1" stroke-linejoin="round"/><path d="M0.5 4.5L8 11.5V16L0.5 8.5Z" fill="#800080" stroke="#000" stroke-width="1.1" stroke-linejoin="round"/><path d="M8 11.5L16 7.5V10.5L8 16Z" fill="#fff" stroke="#000" stroke-width="1.1" stroke-linejoin="round"/><path d="M1.5 5.2L8 11" stroke="#d8b0d8" stroke-width="0.7"/></svg><div class="a nw tr" style="left:101px;top:685px">导入队列</div><div class="a exp" style="left:65px;top:711px"><div class="a" style="left:2px;top:5px;width:7px;height:1px;background:#3d55a0"></div><div class="a" style="left:5px;top:2px;width:1px;height:7px;background:#3d55a0"></div></div><svg class="a" style="left:81px;top:708px" width="16" height="16" viewBox="0 0 17 17"><path d="M0.5 4.5L8 0.5L16 7.5L8 11.5Z" fill="#800080" stroke="#000" stroke-width="1.1" stroke-linejoin="round"/><path d="M0.5 4.5L8 11.5V16L0.5 8.5Z" fill="#800080" stroke="#000" stroke-width="1.1" stroke-linejoin="round"/><path d="M8 11.5L16 7.5V10.5L8 16Z" fill="#fff" stroke="#000" stroke-width="1.1" stroke-linejoin="round"/><path d="M1.5 5.2L8 11" stroke="#d8b0d8" stroke-width="0.7"/></svg><div class="a nw tr" style="left:101px;top:706px">导出队列</div><div class="a exp" style="left:65px;top:733px"><div class="a" style="left:2px;top:5px;width:7px;height:1px;background:#3d55a0"></div><div class="a" style="left:5px;top:2px;width:1px;height:7px;background:#3d55a0"></div></div><svg class="a" style="left:81px;top:730px" width="16" height="16" viewBox="0 0 17 17"><path d="M0.5 4.5L8 0.5L16 7.5L8 11.5Z" fill="#800080" stroke="#000" stroke-width="1.1" stroke-linejoin="round"/><path d="M0.5 4.5L8 11.5V16L0.5 8.5Z" fill="#800080" stroke="#000" stroke-width="1.1" stroke-linejoin="round"/><path d="M8 11.5L16 7.5V10.5L8 16Z" fill="#fff" stroke="#000" stroke-width="1.1" stroke-linejoin="round"/><path d="M1.5 5.2L8 11" stroke="#d8b0d8" stroke-width="0.7"/></svg><div class="a nw tr" style="left:101px;top:727px">常规对话框</div></div><div class="a" style="left:2px;top:1074px;width:330px;height:26px;background:#f0f0f0"></div><div class="a" style="left:29px;top:1074px;width:257px;height:26px;background:#cdcdcd"></div><svg class="a" style="left:10px;top:1079px" width="12" height="16" viewBox="0 0 12 16"><path d="M9 2L3 8l6 6" stroke="#606060" stroke-width="2.4" fill="none"/></svg><svg class="a" style="left:312px;top:1079px" width="12" height="16" viewBox="0 0 12 16"><path d="M3 2l6 6-6 6" stroke="#606060" stroke-width="2.4" fill="none"/></svg></div><div class="a" style="left:355px;top:135px;width:1px;height:1167px;background:#a0a0a0"></div><div class="a" style="left:356px;top:135px;width:4px;height:1167px;background:#f4f4f4"></div><div class="a" style="left:360px;top:135px;width:2px;height:1167px;background:#7a7a7a"></div><div class="a" style="left:362px;top:135px;width:1080px;height:1167px;background:#fff"><div class="a" style="left:1053px;top:0;width:27px;height:1167px;background:#f7f7f7"></div><svg class="a" style="left:1050px;top:10px" width="30" height="26" viewBox="1050 10 30 26"><path d="M1055.7 23.8L1065.4 14L1075 23.8V31L1065.4 21.3L1055.7 31Z" fill="#c4c4c4"/></svg><svg class="a" style="left:1050px;top:1130px" width="30" height="26" viewBox="1050 1130 30 26"><path d="M1055.7 1134.7L1065.4 1144.3L1075 1134.7V1141L1065.4 1150.8L1055.7 1141Z" fill="#c0c0c0"/></svg><div class="a nw" style="left:11px;top:20px;font-size:24px;line-height:30px;color:#0000ff;">PRESS MATCHER 帮助（第 1 部分） 参考 / 对话框</div><div class="a nw" style="left:11px;top:66px;font-size:32px;line-height:40px;color:#a52a2a;font-weight:bold">测量测试图表</div><div class="a" style="left:11px;top:121px;width:1032px;height:2px;background:#606060"></div><div class="a" style="left:11px;top:136px;width:1040px;font-size:24px;line-height:36px">此对话框允许您使用连接到计算机的测量设备测量测试图表。 测量数据直接传输到 PRESS MATCHER 程序。 对话框参数说明如下。</div><div class="a nw" style="left:11px;top:234px;font-size:24px;line-height:30px;color:#008000;">更多详情:</div><div class="a nw" style="left:11px;top:278px;font-size:24px;line-height:30px;color:#0000ff;">设备选择</div><div class="a nw" style="left:11px;top:318px;font-size:24px;line-height:30px;color:#0000ff;">参考文件 – 浏览</div><div class="a nw" style="left:11px;top:359px;font-size:24px;line-height:30px;color:#0000ff;">开始测量</div><div class="a nw" style="left:11px;top:399px;font-size:24px;line-height:30px;color:#0000ff;">重新测量条</div><div class="a nw" style="left:11px;top:440px;font-size:24px;line-height:30px;color:#0000ff;">箭头按钮</div><div class="a nw" style="left:11px;top:480px;font-size:24px;line-height:30px;color:#0000ff;">保存</div><svg class="a" style="left:808px;top:547px" width="12" height="12" viewBox="0 0 12 12"><rect x="1" y="1" width="10" height="10" fill="none" stroke="#008000" stroke-width="1"/><path d="M1 1l5 5 5-5M1 11l4-4M11 11l-4-4" stroke="#008000" stroke-width="1" fill="none"/></svg><div class="a nw" style="left:826px;top:537px;font-size:24px;line-height:30px;color:#008000;">此信息是否有帮助?</div></div></div>
</body></html>
